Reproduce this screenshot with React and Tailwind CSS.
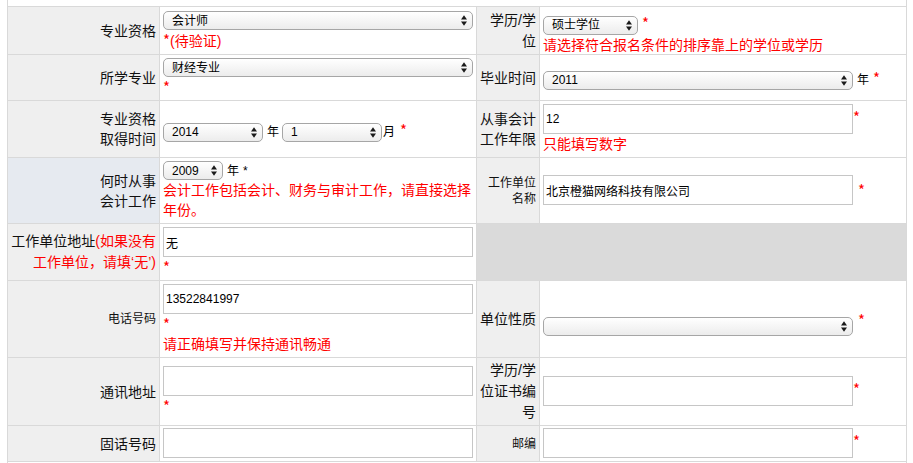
import React from "react"

const Arrows = () => (
  <svg width="6" height="11" viewBox="0 0 6 11" className="shrink-0">
    <path d="M3 0.3 L6 4.4 H0 Z M0 6.6 H6 L3 10.7 Z" fill="#1a1a1a" />
  </svg>
)

const Sel = ({ w, children }) => (
  <div className={`flex h-[19px] shrink-0 items-center justify-between rounded-[5px] border border-[#a6a6a6] bg-linear-to-b from-white to-[#ececec] pl-[8px] pr-[5px] text-[12px] leading-[14px] text-black ${w}`}>
    <span>{children}</span>
    <Arrows />
  </div>
)

const Inp = ({ value }) => (
  <input
    defaultValue={value}
    className="h-[30px] w-[310px] shrink-0 border border-[#c6c6c6] bg-white px-[2px] text-[12px] text-black outline-none"
  />
)

const Star = ({ className }) => (
  <span className={`font-['Noto_Sans_CJK_SC',sans-serif] text-[15px] leading-[20px] text-[#ff0000] ${className}`}>*</span>
)

const Label = ({ children, className }) => (
  <div className={`flex items-center justify-end pr-[3px] text-right text-[#111] ${className}`}>{children}</div>
)

const Red = ({ children }) => <div className="h-[20px] text-[14px] leading-[20px] text-[#ff0000]">{children}</div>

export default function App() {
  return (
    <div className="h-[463px] overflow-hidden bg-white pl-[7px] font-['Liberation_Sans','Noto_Sans_CJK_SC',sans-serif]">
      <div className="h-[6px] w-[900px] border-x border-[#d9d9d9] bg-white" />
      <div className="grid w-[900px] grid-cols-[151px_316px_62px_366px] grid-rows-[47px_45px_56px_65px_56px_76px_67px_35px] gap-px border border-[#d9d9d9] bg-[#d9d9d9]">
        {/* 专业资格 / 学历学位 */}
        <Label className="bg-[#efefef] text-[14px] leading-[20px]">专业资格</Label>
        <div className="bg-white pl-[3px] pt-[4px]">
          <Sel w="w-[310px]">会计师</Sel>
          <Red><Star />(待验证)</Red>
        </div>
        <Label className="bg-[#efefef] text-[14px] leading-[21px]">学历/学<br />位</Label>
        <div className="bg-white pl-[3px] pt-[6px]">
          <div className="flex items-baseline">
            <Sel w="w-[95px]">硕士学位</Sel>
            <Star className="ml-[4px]" />
          </div>
          <Red>请选择符合报名条件的排序靠上的学位或学历</Red>
        </div>

        {/* 所学专业 / 毕业时间 */}
        <Label className="bg-[#efefef] text-[14px] leading-[20px]">所学专业</Label>
        <div className="bg-white pl-[3px] pt-[3px]">
          <Sel w="w-[310px]">财经专业</Sel>
          <Red><Star /></Red>
        </div>
        <Label className="bg-[#efefef] text-[14px] leading-[20px]">毕业时间</Label>
        <div className="bg-white pl-[3px] pt-[13px]">
          <div className="flex items-baseline">
            <Sel w="w-[310px]">2011</Sel>
            <span className="ml-[4px] text-[12px]">年</span>
            <Star className="ml-[4px]" />
          </div>
        </div>

        {/* 专业资格取得时间 / 从事会计工作年限 */}
        <Label className="bg-[#efefef] text-[14px] leading-[20px]">专业资格<br />取得时间</Label>
        <div className="bg-white pl-[3px] pt-[19px]">
          <div className="flex items-baseline">
            <Sel w="w-[100px]">2014</Sel>
            <span className="ml-[4px] text-[12px]">年</span>
            <div className="ml-[3px]">
              <Sel w="w-[100px]">1</Sel>
            </div>
            <span className="ml-[1px] text-[12px]">月</span>
            <Star className="ml-[5px]" />
          </div>
        </div>
        <Label className="bg-[#efefef] text-[14px] leading-[20px]">从事会计<br />工作年限</Label>
        <div className="bg-white pl-[3px] pt-[3px]">
          <div className="flex items-baseline">
            <Inp value="12" />
            <Star />
          </div>
          <Red>只能填写数字</Red>
        </div>

        {/* 何时从事会计工作 / 工作单位名称 */}
        <Label className="bg-[#e6eaf0] text-[14px] leading-[20px]">何时从事<br />会计工作</Label>
        <div className="bg-white pl-[3px] pt-[3px]">
          <div className="flex items-baseline">
            <Sel w="w-[60px]">2009</Sel>
            <span className="ml-[4px] text-[12px]">年</span>
            <span className="ml-[4px] text-[12px]">*</span>
          </div>
          <div className="text-[14px] leading-[20px] text-[#ff0000]">会计工作包括会计、财务与审计工作，请直接选择年份。</div>
        </div>
        <Label className="bg-[#efefef] text-[12px] leading-[16px]">工作单位<br />名称</Label>
        <div className="bg-white pl-[3px] pt-[17px]">
          <div className="flex items-baseline">
            <Inp value="北京橙猫网络科技有限公司" />
            <Star className="ml-[5px]" />
          </div>
        </div>

        {/* 工作单位地址 */}
        <Label className="bg-[#efefef] text-[14px] leading-[21px]">
          <span>
            工作单位地址<span className="text-[#ff0000]">(如果没有</span>
            <br />
            <span className="text-[#ff0000]">工作单位，请填‘无’)</span>
          </span>
        </Label>
        <div className="bg-white pl-[3px] pt-[3px]">
          <Inp value="无" />
          <Red><Star /></Red>
        </div>
        <div className="col-span-2 bg-[#dadada]" />

        {/* 电话号码 / 单位性质 */}
        <Label className="bg-[#efefef] text-[12px] leading-[16px]">电话号码</Label>
        <div className="bg-white pl-[3px] pt-[3px]">
          <Inp value="13522841997" />
          <Red><Star /></Red>
          <Red>请正确填写并保持通讯畅通</Red>
        </div>
        <Label className="bg-[#efefef] text-[14px] leading-[20px]">单位性质</Label>
        <div className="bg-white pl-[3px] pt-[29px]">
          <div className="flex items-baseline">
            <Sel w="w-[310px]"></Sel>
            <Star className="ml-[5px]" />
          </div>
        </div>

        {/* 通讯地址 / 学历学位证书编号 */}
        <Label className="bg-[#efefef] text-[14px] leading-[20px]">通讯地址</Label>
        <div className="bg-white pl-[3px] pt-[8px]">
          <Inp value="" />
          <Red><Star /></Red>
        </div>
        <Label className="bg-[#efefef] text-[14px] leading-[21px]">学历/学<br />位证书编<br />号</Label>
        <div className="bg-white pl-[3px] pt-[18px]">
          <div className="flex items-baseline">
            <Inp value="" />
            <Star />
          </div>
        </div>

        {/* 固话号码 / 邮编 */}
        <Label className="bg-[#efefef] text-[14px] leading-[20px]">固话号码</Label>
        <div className="bg-white pl-[3px] pt-[2px]">
          <Inp value="" />
        </div>
        <Label className="bg-[#efefef] text-[12px] leading-[16px]">邮编</Label>
        <div className="bg-white pl-[3px] pt-[2px]">
          <div className="flex items-baseline">
            <Inp value="" />
            <Star />
          </div>
        </div>
      </div>
      <div className="h-[1px] w-[900px] border-x border-[#d9d9d9]" />
    </div>
  )
}
